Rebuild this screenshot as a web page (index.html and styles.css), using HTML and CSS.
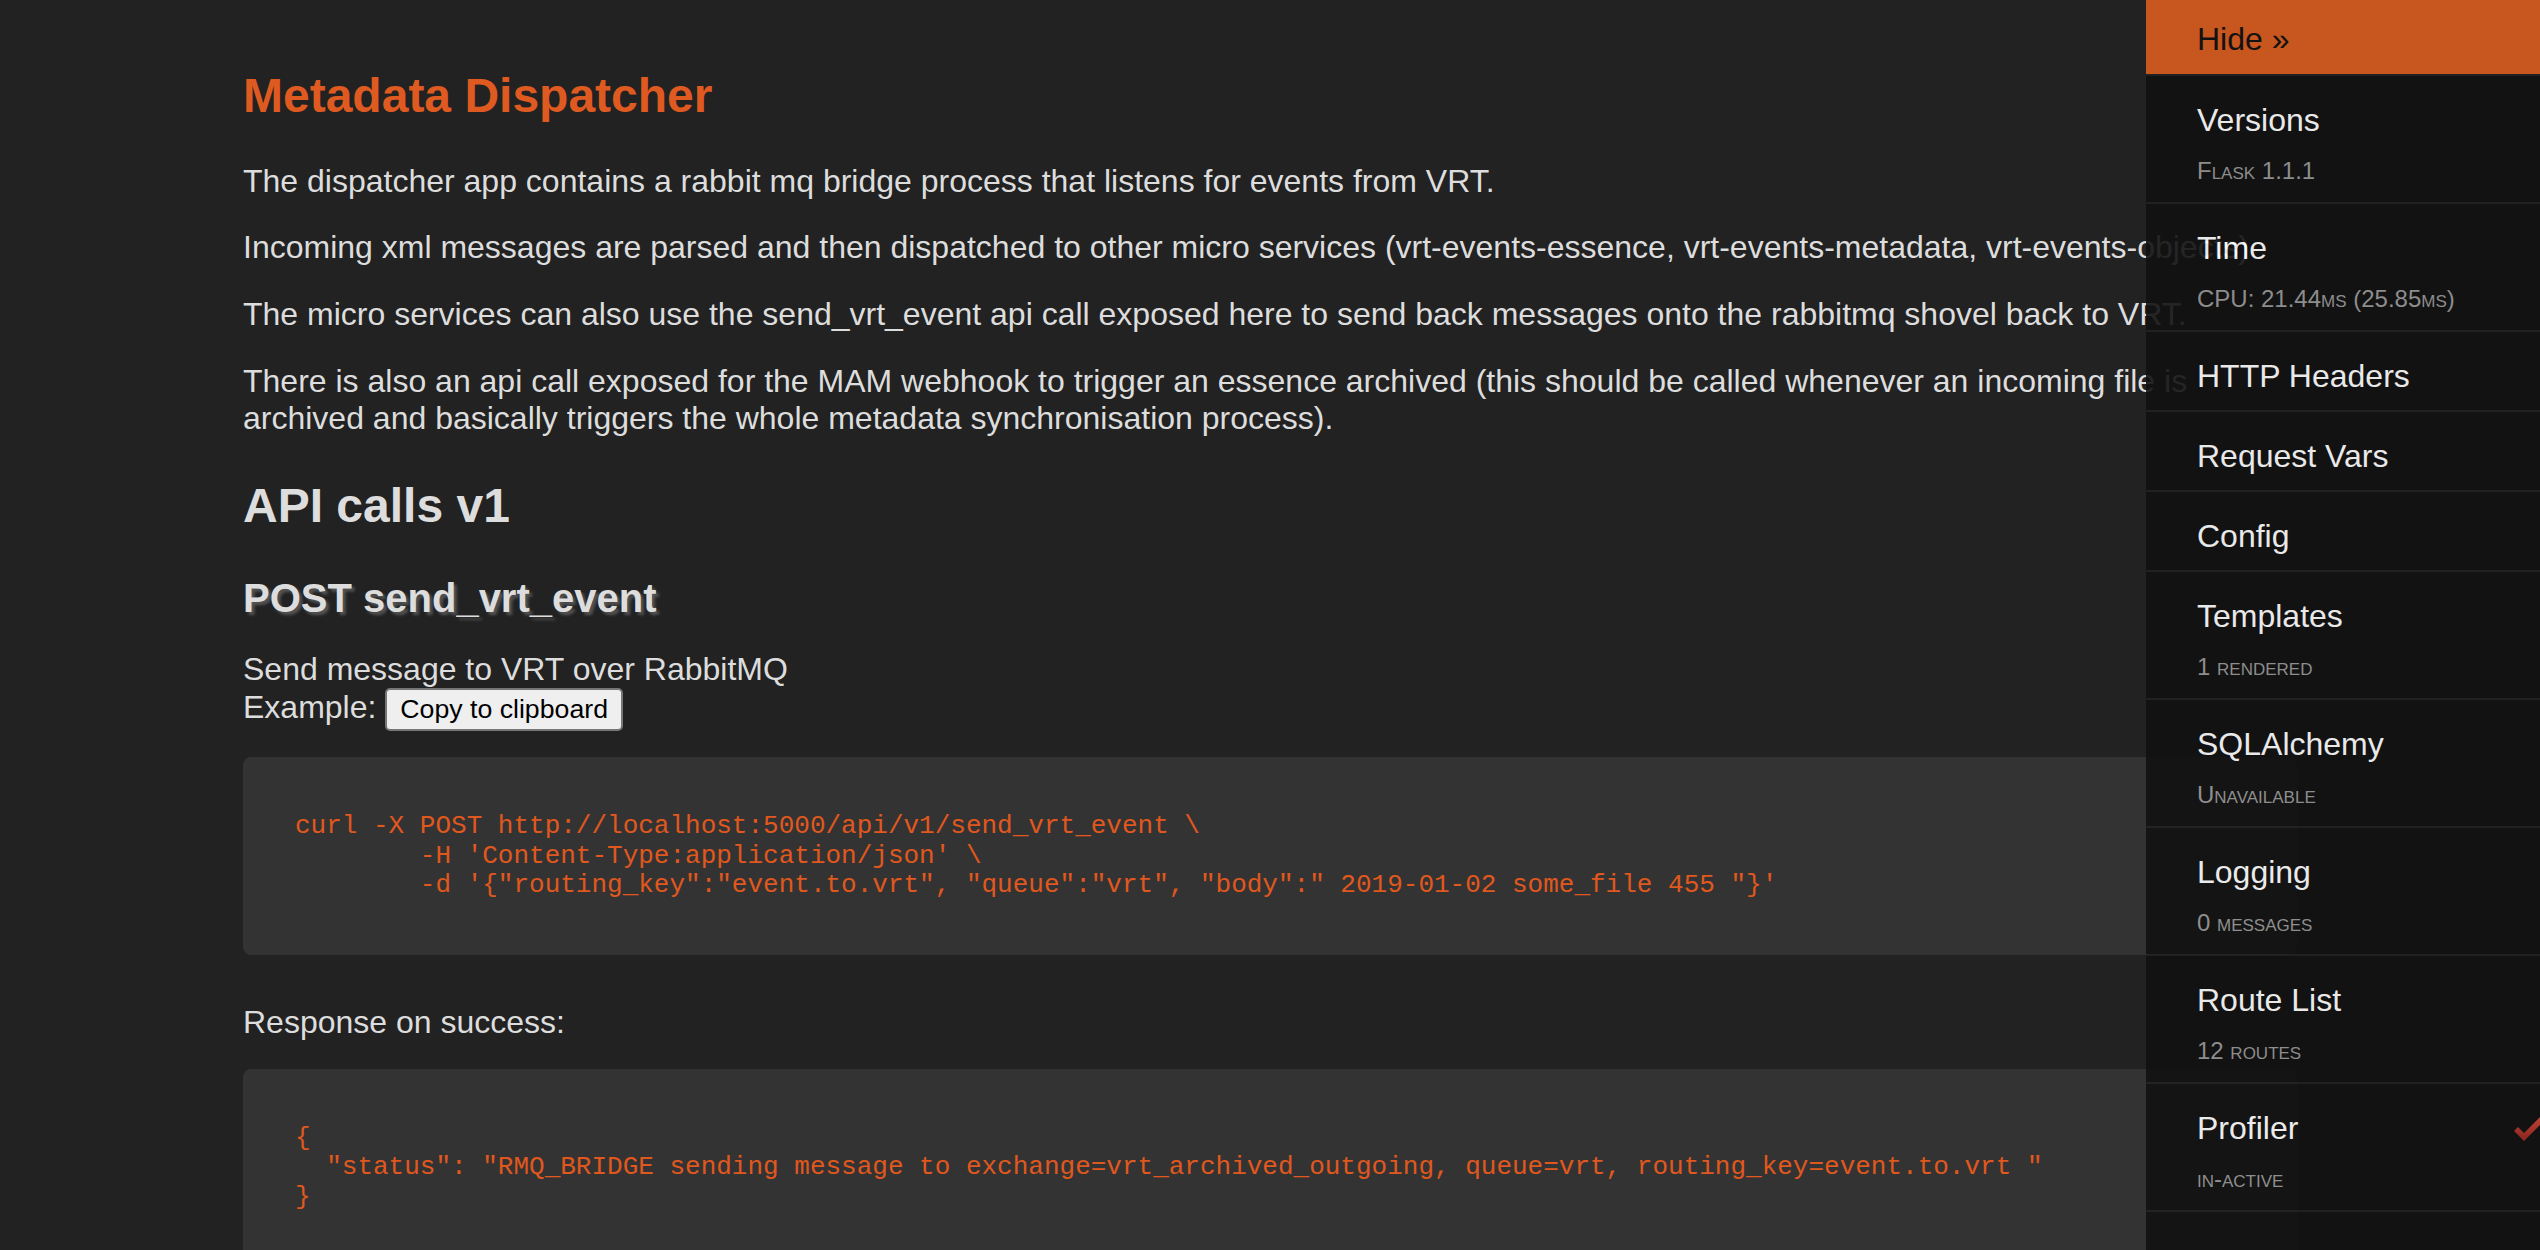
FILE: index.html
```html
<!DOCTYPE html>
<html lang="en">
<head>
<meta charset="utf-8">
<title>Metadata Dispatcher</title>
<link rel="stylesheet" href="styles.css">
</head>
<body>
<main class="content">
  <h1 class="title">Metadata Dispatcher</h1>
  <p class="text intro">The dispatcher app contains a rabbit mq bridge process that listens for events from VRT.</p>
  <p class="text">Incoming xml messages are parsed and then dispatched to other micro services (vrt-events-essence, vrt-events-metadata, vrt-events-objects)</p>
  <p class="text">The micro services can also use the send_vrt_event api call exposed here to send back messages onto the rabbitmq shovel back to VRT.</p>
  <p class="text">There is also an api call exposed for the MAM webhook to trigger an essence archived (this should be called whenever an incoming file is archived and basically triggers the whole metadata synchronisation process).</p>

  <h2 class="section-title">API calls v1</h2>
  <h3 class="endpoint-title">POST send_vrt_event</h3>
  <p class="text endpoint-desc">Send message to VRT over RabbitMQ<br>Example: <button class="copy-btn" type="button">Copy to clipboard</button></p>
  <pre class="code-block example"><code>curl -X POST http://localhost:5000/api/v1/send_vrt_event \
        -H 'Content-Type:application/json' \
        -d '{"routing_key":"event.to.vrt", "queue":"vrt", "body":" 2019-01-02 some_file 455 "}'</code></pre>
  <p class="text response-label">Response on success:</p>
  <pre class="code-block response"><code>{
  "status": "RMQ_BRIDGE sending message to exchange=vrt_archived_outgoing, queue=vrt, routing_key=event.to.vrt "
}</code></pre>
</main>

<aside class="toolbar">
  <ul class="tb-list">
    <li class="tb-item tb-hide"><div class="tb-title">Hide &raquo;</div></li>
    <li class="tb-item"><div class="tb-title">Versions</div><div class="tb-sub">Flask 1.1.1</div></li>
    <li class="tb-item"><div class="tb-title">Time</div><div class="tb-sub">CPU: 21.44ms (25.85ms)</div></li>
    <li class="tb-item"><div class="tb-title">HTTP Headers</div></li>
    <li class="tb-item"><div class="tb-title">Request Vars</div></li>
    <li class="tb-item"><div class="tb-title">Config</div></li>
    <li class="tb-item"><div class="tb-title">Templates</div><div class="tb-sub">1 rendered</div></li>
    <li class="tb-item"><div class="tb-title">SQLAlchemy</div><div class="tb-sub">Unavailable</div></li>
    <li class="tb-item"><div class="tb-title">Logging</div><div class="tb-sub">0 messages</div></li>
    <li class="tb-item"><div class="tb-title">Route List</div><div class="tb-sub">12 routes</div></li>
    <li class="tb-item">
      <div class="tb-title">Profiler</div><div class="tb-sub">in-active</div>
      <svg class="tb-check" width="34" height="28" viewBox="0 0 34 28" aria-hidden="true">
        <defs>
          <linearGradient id="chk" x1="0" y1="0" x2="0" y2="1">
            <stop offset="0" stop-color="#d2473b"/>
            <stop offset="1" stop-color="#9e2a22"/>
          </linearGradient>
        </defs>
        <polyline points="4,16 12,24 32,4" fill="none" stroke="url(#chk)" stroke-width="5.5" stroke-linejoin="miter"/>
      </svg>
    </li>
  </ul>
</aside>
</body>
</html>
```
FILE: styles.css
```css
html, body {
  margin: 0;
  padding: 0;
  background: #222222;
}

body {
  font-family: "Liberation Sans", Arial, Helvetica, sans-serif;
  color: #dddddd;
}

.content {
  padding: 68px 243px 60px;
}

.title {
  margin: 0;
  font-size: 48px;
  line-height: 55px;
  font-weight: bold;
  color: #df5a21;
}

.text {
  margin: 30px 0 0;
  font-size: 32px;
  line-height: 36.8px;
}

.intro {
  margin-top: 39.5px;
}

.section-title {
  margin: 42px 0 0;
  font-size: 48px;
  line-height: 55px;
  font-weight: bold;
  color: #dddddd;
}

.endpoint-title {
  margin: 42px 0 0;
  font-size: 40px;
  line-height: 46px;
  font-weight: bold;
  color: #dddddd;
  text-shadow: 3px 3px 3px #555555;
}

.endpoint-desc {
  margin-top: 29.5px;
}

.copy-btn {
  font-family: "Liberation Sans", Arial, sans-serif;
  font-size: 26.7px;
  line-height: normal;
  color: #000000;
  background: #efefef;
  border: 2px solid #767676;
  border-radius: 5px;
  padding: 4px 13px;
  margin: 0;
  vertical-align: baseline;
}

.code-block {
  margin: 26.5px 0 0;
  padding: 55px 52px 54px;
  background: #333333;
  border-radius: 8px;
  font-family: "Liberation Mono", "Courier New", monospace;
  font-size: 26px;
  line-height: 29.45px;
  color: #e0581e;
  white-space: pre;
  overflow: hidden;
}

.code-block code {
  font-family: inherit;
  font-size: inherit;
}

.response-label {
  margin-top: 49.5px;
}

.response {
  margin-top: 27.7px;
  padding-bottom: 120px;
}

/* Debug toolbar overlay */
.toolbar {
  position: fixed;
  top: 0;
  right: 0;
  bottom: 0;
  width: 394px;
  background: #111111;
  opacity: 0.9;
  overflow: hidden;
  font-family: "Liberation Sans", Arial, Helvetica, sans-serif;
}

.tb-list {
  list-style: none;
  margin: 0;
  padding: 0;
}

.tb-item {
  position: relative;
  padding: 26px 20px 16px 51px;
  border-bottom: 2px solid #222222;
  color: #ffffff;
}

.tb-title {
  font-size: 32px;
  line-height: 36px;
}

.tb-sub {
  margin-top: 18px;
  font-size: 24px;
  line-height: 30px;
  color: #999999;
  font-variant: small-caps;
}

.tb-hide {
  padding: 21px 20px 17px 51px;
  background: #da5c20;
  color: #111111;
}

.tb-check {
  position: absolute;
  top: 29px;
  right: -6px;
}
```
